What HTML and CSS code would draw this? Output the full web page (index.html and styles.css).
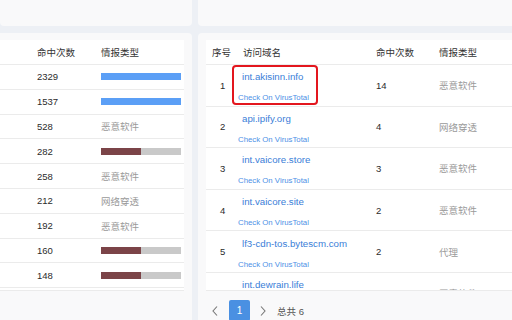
FILE: index.html
```html
<!DOCTYPE html>
<html lang="zh-CN">
<head>
  <meta charset="UTF-8" />
  <meta name="viewport" content="width=device-width, initial-scale=1.0" />
  <title>情报命中统计</title>
  <link rel="stylesheet" href="styles.css">
</head>
<body>
  <div class="dashboard">
    <div class="card card-top"></div>
    <div class="card card-top"></div>

    <!-- left: hits by type -->
    <div class="card card-main card-left">
      <div class="table-wrap">
        <div class="lt-row lt-head">
          <span></span><span>命中次数</span><span>情报类型</span>
        </div>
        <div class="lt-row"><span></span><span>2329</span><span><div class="bar bar-blue"><div class="bar-fill" style="width:100%"></div></div></span></div>
        <div class="lt-row"><span></span><span>1537</span><span><div class="bar bar-blue"><div class="bar-fill" style="width:100%"></div></div></span></div>
        <div class="lt-row"><span></span><span>528</span><span class="type">恶意软件</span></div>
        <div class="lt-row"><span></span><span>282</span><span><div class="bar"><div class="bar-fill" style="width:50%"></div></div></span></div>
        <div class="lt-row"><span></span><span>258</span><span class="type">恶意软件</span></div>
        <div class="lt-row"><span></span><span>212</span><span class="type">网络穿透</span></div>
        <div class="lt-row"><span></span><span>192</span><span class="type">恶意软件</span></div>
        <div class="lt-row"><span></span><span>160</span><span><div class="bar"><div class="bar-fill" style="width:50%"></div></div></span></div>
        <div class="lt-row"><span></span><span>148</span><span><div class="bar"><div class="bar-fill" style="width:50%"></div></div></span></div>
      </div>
    </div>

    <!-- right: visited domains -->
    <div class="card card-main card-right">
      <div class="table-wrap">
        <div class="rt-row rt-head">
          <span class="c-no">序号</span><span class="c-domain">访问域名</span><span class="c-hits">命中次数</span><span class="c-type">情报类型</span>
        </div>
        <div class="rt-row">
          <span class="c-no">1</span>
          <span class="c-domain"><span class="domain-box active"><a class="domain">int.akisinn.info</a><a class="vt">Check On VirusTotal</a></span></span>
          <span class="c-hits">14</span><span class="c-type type">恶意软件</span>
        </div>
        <div class="rt-row">
          <span class="c-no">2</span>
          <span class="c-domain"><span class="domain-box"><a class="domain">api.ipify.org</a><a class="vt">Check On VirusTotal</a></span></span>
          <span class="c-hits">4</span><span class="c-type type">网络穿透</span>
        </div>
        <div class="rt-row">
          <span class="c-no">3</span>
          <span class="c-domain"><span class="domain-box"><a class="domain">int.vaicore.store</a><a class="vt">Check On VirusTotal</a></span></span>
          <span class="c-hits">3</span><span class="c-type type">恶意软件</span>
        </div>
        <div class="rt-row">
          <span class="c-no">4</span>
          <span class="c-domain"><span class="domain-box"><a class="domain">int.vaicore.site</a><a class="vt">Check On VirusTotal</a></span></span>
          <span class="c-hits">2</span><span class="c-type type">恶意软件</span>
        </div>
        <div class="rt-row">
          <span class="c-no">5</span>
          <span class="c-domain"><span class="domain-box"><a class="domain">lf3-cdn-tos.bytescm.com</a><a class="vt">Check On VirusTotal</a></span></span>
          <span class="c-hits">2</span><span class="c-type type">代理</span>
        </div>
        <div class="rt-row">
          <span class="c-no">6</span>
          <span class="c-domain"><span class="domain-box"><a class="domain">int.dewrain.life</a><a class="vt">Check On VirusTotal</a></span></span>
          <span class="c-hits">1</span><span class="c-type type">恶意软件</span>
        </div>
      </div>
      <div class="pager">
        <button class="pager-arrow"><svg viewBox="0 0 6 10" width="6" height="10"><path d="M5 0.5 L1 5 L5 9.5" fill="none" stroke="#777" stroke-width="1.1"/></svg></button>
        <button class="pager-page">1</button>
        <button class="pager-arrow pager-next"><svg viewBox="0 0 6 10" width="6" height="10"><path d="M1 0.5 L5 5 L1 9.5" fill="none" stroke="#777" stroke-width="1.1"/></svg></button>
        <span class="pager-total">总共 6</span>
      </div>
    </div>
  </div>
</body>
</html>
```

FILE: styles.css
```css
:root {
  --page-bg: #edf0f5;
  --card-bg: #f9f9fa;
  --line: #ebebeb;
  --text: #2b2b2b;
  --muted: #9a9a9a;
  --link: #3a7ed8;
  --link-light: #4d90e6;
  --blue-bar: #5b9ff6;
  --brown-bar: #7b4448;
  --gray-bar: #c9c9c9;
  --alert: #e3161e;
}

* {
  box-sizing: border-box;
  margin: 0;
  padding: 0;
}

html, body {
  width: 100%;
  height: 100%;
  overflow: hidden;
  background: var(--page-bg);
  font-family: "Liberation Sans", "Noto Sans CJK SC", sans-serif;
  color: var(--text);
}

.dashboard {
  display: grid;
  grid-template-columns: 192px 340px;
  grid-template-rows: 26px 300px;
  column-gap: 6px;
  row-gap: 7px;
}

.card {
  background: var(--card-bg);
  border-radius: 4px;
}

.card-top {
  border-radius: 0 0 4px 4px;
}

.card-left {
  padding: 7px 8px 0 0;
  border-radius: 0 4px 4px 0;
}

.card-right {
  padding: 7px 0 0 8px;
  border-radius: 4px 0 0 4px;
}

.table-wrap {
  height: 251px;
  overflow: hidden;
  background: #fff;
  border-bottom: 1px solid var(--line);
}

/* left table */
.lt-row {
  display: grid;
  grid-template-columns: 29px 64px 1fr;
  height: 24.8px;
  align-items: center;
  border-bottom: 1px solid var(--line);
  font-size: 9.5px;
}

.lt-row > span {
  padding-left: 8px;
}

.lt-head {
  height: 25px;
  color: #333;
}

.type {
  color: var(--muted);
}

.bar {
  width: 80px;
  height: 7px;
  background: var(--gray-bar);
}

.bar-fill {
  height: 100%;
  background: var(--brown-bar);
}

.bar-blue .bar-fill {
  background: var(--blue-bar);
}

/* right table */
.rt-row {
  display: grid;
  grid-template-columns: 26px 136px 63px 1fr;
  height: 41.6px;
  align-items: center;
  border-bottom: 1px solid var(--line);
  font-size: 9.5px;
  white-space: nowrap;
}

.rt-head {
  height: 25px;
  color: #333;
}

.rt-head .c-no {
  padding-left: 6px;
}

.rt-head .c-domain {
  padding-left: 11px;
}

.c-no {
  padding-left: 14px;
}

.c-hits,
.c-type {
  padding-left: 8px;
}

.domain-box {
  display: inline-flex;
  flex-direction: column;
  height: 40px;
  padding: 1px 7px 0 4px;
  border: 2px solid transparent;
  border-radius: 4px;
}

.domain-box.active {
  border-color: var(--alert);
}

.domain {
  color: var(--link);
  font-size: 9.7px;
  line-height: 18px;
  padding-left: 4px;
}

.vt {
  color: var(--link-light);
  font-size: 7.8px;
  line-height: 12px;
  margin-top: 6px;
}

/* pager */
.pager {
  display: flex;
  align-items: center;
  padding-top: 9px;
  font-size: 9.5px;
}

.pager button {
  border: none;
  background: none;
  font-family: inherit;
  height: 21px;
  display: flex;
  align-items: center;
  justify-content: center;
}

.pager-arrow {
  width: 22px;
  margin-left: -2px;
}

.pager-page {
  width: 21px;
  margin-left: 3px;
  background: #4a90e2 !important;
  color: #fff;
  font-size: 10px;
  border-radius: 2px;
}

.pager-next {
  width: 24px;
  margin-left: 1px;
}

.pager-total {
  margin-left: 2px;
  color: #555;
}
```
